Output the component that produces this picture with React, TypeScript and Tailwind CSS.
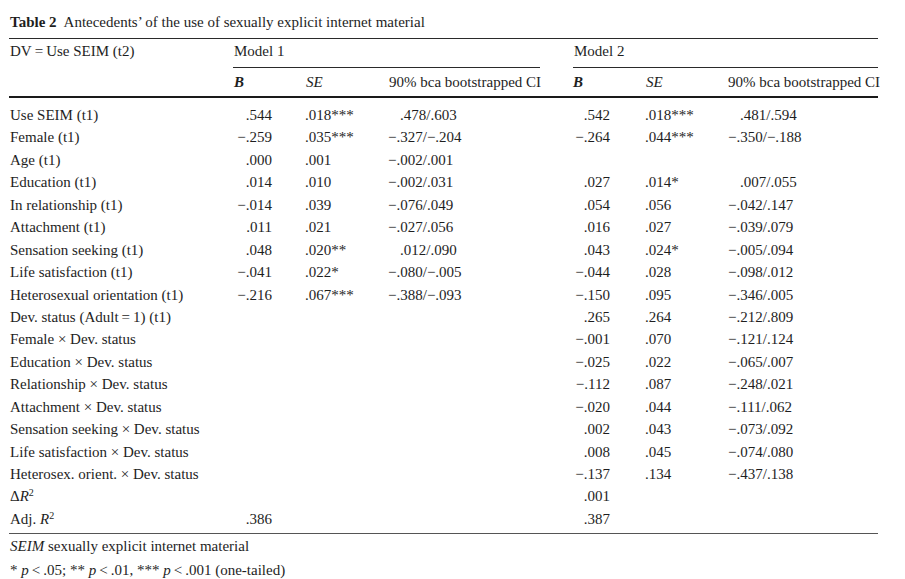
import React from "react";

type Row = {
  label: React.ReactNode;
  b1?: string;
  se1?: string;
  ci1?: string;
  b2?: string;
  se2?: string;
  ci2?: string;
};

const M = "\u2212";

const rows: Row[] = [
  { label: "Use SEIM (t1)", b1: ".544", se1: ".018***", ci1: ".478/.603", b2: ".542", se2: ".018***", ci2: ".481/.594" },
  { label: "Female (t1)", b1: `${M}.259`, se1: ".035***", ci1: `${M}.327/${M}.204`, b2: `${M}.264`, se2: ".044***", ci2: `${M}.350/${M}.188` },
  { label: "Age (t1)", b1: ".000", se1: ".001", ci1: `${M}.002/.001` },
  { label: "Education (t1)", b1: ".014", se1: ".010", ci1: `${M}.002/.031`, b2: ".027", se2: ".014*", ci2: ".007/.055" },
  { label: "In relationship (t1)", b1: `${M}.014`, se1: ".039", ci1: `${M}.076/.049`, b2: ".054", se2: ".056", ci2: `${M}.042/.147` },
  { label: "Attachment (t1)", b1: ".011", se1: ".021", ci1: `${M}.027/.056`, b2: ".016", se2: ".027", ci2: `${M}.039/.079` },
  { label: "Sensation seeking (t1)", b1: ".048", se1: ".020**", ci1: ".012/.090", b2: ".043", se2: ".024*", ci2: `${M}.005/.094` },
  { label: "Life satisfaction (t1)", b1: `${M}.041`, se1: ".022*", ci1: `${M}.080/${M}.005`, b2: `${M}.044`, se2: ".028", ci2: `${M}.098/.012` },
  { label: "Heterosexual orientation (t1)", b1: `${M}.216`, se1: ".067***", ci1: `${M}.388/${M}.093`, b2: `${M}.150`, se2: ".095", ci2: `${M}.346/.005` },
  { label: "Dev. status (Adult\u2009=\u20091) (t1)", b2: ".265", se2: ".264", ci2: `${M}.212/.809` },
  { label: "Female × Dev. status", b2: `${M}.001`, se2: ".070", ci2: `${M}.121/.124` },
  { label: "Education × Dev. status", b2: `${M}.025`, se2: ".022", ci2: `${M}.065/.007` },
  { label: "Relationship × Dev. status", b2: `${M}.112`, se2: ".087", ci2: `${M}.248/.021` },
  { label: "Attachment × Dev. status", b2: `${M}.020`, se2: ".044", ci2: `${M}.111/.062` },
  { label: "Sensation seeking × Dev. status", b2: ".002", se2: ".043", ci2: `${M}.073/.092` },
  { label: "Life satisfaction × Dev. status", b2: ".008", se2: ".045", ci2: `${M}.074/.080` },
  { label: "Heterosex. orient. × Dev. status", b2: `${M}.137`, se2: ".134", ci2: `${M}.437/.138` },
  {
    label: (
      <>
        Δ<i>R</i>
        <sup className="text-[10px]">2</sup>
      </>
    ),
    b2: ".001",
  },
  {
    label: (
      <>
        Adj. <i>R</i>
        <sup className="text-[10px]">2</sup>
      </>
    ),
    b1: ".386",
    b2: ".387",
  },
];

// CI values that start with a digit get indented by the width of the minus sign
const Ci = ({ v }: { v?: string }) => (
  <span className={v && !v.startsWith(M) ? "pl-[12px]" : ""}>{v}</span>
);

export default function App() {
  return (
    <div
      className="min-h-[579px] w-[905px] bg-white text-[15px] text-[#1e1e1e]"
      style={{ fontFamily: '"Liberation Serif", "Times New Roman", serif' }}
    >
      <div className="ml-[9px] w-[869px] pt-[12px]">
        {/* title */}
        <div className="h-[20px] pl-[1px] leading-[20px]">
          <b>Table 2</b>
          <span className="ml-[7px]">Antecedents’ of the use of sexually explicit internet material</span>
        </div>
        <div className="mt-[6px] h-px bg-[#2a2a2a]" />

        {/* header */}
        <div className="grid grid-cols-[224px_72px_83px_152px_33px_72px_83px_150px] whitespace-nowrap">
          <div className="row-span-2 pl-[1px] leading-[24px]">DV{"\u2009"}={"\u2009"}Use SEIM (t2)</div>
          <div className="col-span-3 h-[29px] border-b border-[#2a2a2a] pl-[1px] leading-[24px]">Model 1</div>
          <div />
          <div className="col-span-3 h-[29px] border-b border-[#2a2a2a] pl-[1px] leading-[24px]">Model 2</div>

          <div className="flex h-[28px] items-center pl-[1px] font-bold italic">B</div>
          <div className="flex h-[28px] items-center pl-[1px] italic">SE</div>
          <div className="flex h-[28px] items-center pl-[1px]">90% bca bootstrapped CI</div>
          <div />
          <div className="flex h-[28px] items-center font-bold italic">B</div>
          <div className="flex h-[28px] items-center pl-[1px] italic">SE</div>
          <div className="flex h-[28px] items-center">90% bca bootstrapped CI</div>
        </div>
        <div className="h-[2px] bg-[#1a1a1a]" />

        {/* body */}
        <div className="pt-[6px]">
          {rows.map((r, i) => (
            <div
              key={i}
              className="grid h-[22.45px] grid-cols-[224px_72px_83px_152px_33px_72px_83px_150px] items-center whitespace-nowrap"
            >
              <div className="pl-[1px]">{r.label}</div>
              <div className="pr-[33px] text-right">{r.b1}</div>
              <div>{r.se1}</div>
              <div>
                <Ci v={r.ci1} />
              </div>
              <div />
              <div className="pr-[35px] text-right">{r.b2}</div>
              <div>{r.se2}</div>
              <div>
                <Ci v={r.ci2} />
              </div>
            </div>
          ))}
        </div>
        <div className="mt-[3px] h-px bg-[#555]" />

        {/* notes */}
        <div className="pl-[1px] leading-[24px]">
          <div>
            <i>SEIM</i> sexually explicit internet material
          </div>
          <div>
            * <i>p</i>
            {"\u2009"}&lt;{"\u2009"}.05; ** <i>p</i>
            {"\u2009"}&lt;{"\u2009"}.01, *** <i>p</i>
            {"\u2009"}&lt;{"\u2009"}.001 (one-tailed)
          </div>
        </div>
      </div>
    </div>
  );
}
